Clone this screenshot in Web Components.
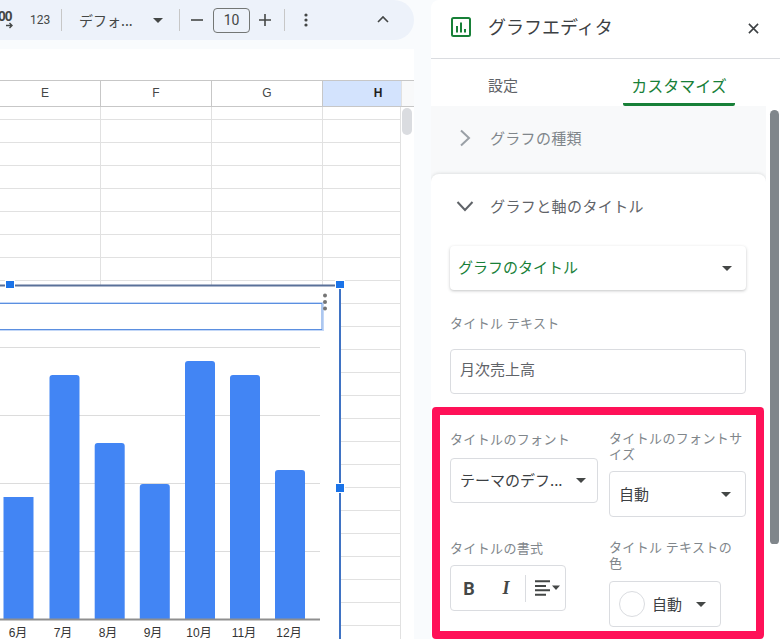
<!DOCTYPE html>
<html lang="ja">
<head>
<meta charset="utf-8">
<title>グラフエディタ</title>
<style>
  html, body { margin: 0; height: 639px; overflow: hidden; background: #f9fbfd; }
  body { font-family: "Noto Sans CJK JP", "Noto Sans", sans-serif; display: flex; gap: 17px; }
</style>
</head>
<body>
<sheet-area></sheet-area>
<chart-editor></chart-editor>

<script>
// small helper so each element only declares its css + markup
function define(name, css, html) {
  customElements.define(name, class extends HTMLElement {
    constructor() {
      super();
      this.attachShadow({mode: 'open'}).innerHTML = `<style>${css}</style>${html}`;
    }
  });
}

const caret = `<svg width="10" height="5" viewBox="0 0 10 5"><path d="M0 0h10L5 5z" fill="#444746"/></svg>`;

define('sheet-toolbar', `
  :host { display: flex; align-items: center; height: 40px; background: #edf2fa; border-radius: 0 22px 22px 0; color: #444746; font-family: Roboto, sans-serif; overflow: hidden; }
  .dec { width: 13px; height: 26px; margin-right: 17px; position: relative; overflow: hidden; }
  .dec b { display: block; font: bold 14px/13px "Liberation Sans", sans-serif; letter-spacing: -1px; margin: 3px 0 0 -2px; }
  .dec svg { position: absolute; left: 6px; top: 15px; }
  .num { font-size: 12px; width: 20px; margin-right: 11px; }
  .sep { width: 1px; height: 22px; background: #c7c7c7; }
  .font { font: 14px "Noto Sans CJK JP", sans-serif; margin: 0 16px 0 17px; width: 58px; white-space: nowrap; }
  .box { width: 35px; height: 23px; border: 1px solid #747775; border-radius: 4px; text-align: center; font-size: 14px; line-height: 23px; margin: 0 9px 0 10px; color: #444746; }
  svg { flex: none; }
`, `
  <div class="dec"><b>00</b><svg width="7" height="7" viewBox="0 0 7 7"><path d="M0 3.5h5M3.500 1 6 3.500 3.500 6" fill="none" stroke="#444746" stroke-width="1.4"/></svg></div>
  <span class="num">123</span>
  <span class="sep"></span>
  <span class="font">デフォ...</span>
  ${caret}
  <span class="sep" style="margin:0 11px 0 16px"></span>
  <svg width="12" height="12" viewBox="0 0 12 12"><path d="M0 6h12" stroke="#444746" stroke-width="1.6"/></svg>
  <span class="box">10</span>
  <svg width="12" height="12" viewBox="0 0 12 12"><path d="M0 6h12M6 0v12" stroke="#444746" stroke-width="1.6"/></svg>
  <span class="sep" style="margin:0 19px 0 13px"></span>
  <svg width="4" height="14" viewBox="0 0 4 14"><circle cx="2" cy="2" r="1.6" fill="#444746"/><circle cx="2" cy="7" r="1.6" fill="#444746"/><circle cx="2" cy="12" r="1.6" fill="#444746"/></svg>
  <svg style="margin:-2px 0 0 69px" width="12" height="8" viewBox="0 0 12 8"><path d="M1 7l5-5 5 5" fill="none" stroke="#444746" stroke-width="1.6"/></svg>
`);

define('sheet-grid', `
  :host { display: block; position: relative; flex: 1; background: #fff; overflow: hidden; }
  .formula { height: 31px; border-bottom: 1px solid #c7c7c7; }
  .head { display: flex; height: 25px; border-bottom: 1px solid #c7c7c7; }
  .cols { display: flex; width: 401px; overflow: hidden; }
  .cols span { flex: none; width: 110px; border-right: 1px solid #c7c7c7; text-align: center; font: 12px/25px "Liberation Sans", sans-serif; color: #444746; }
  .cols span:first-child { margin-left: -10px; }
  .cols .sel { background: #d3e3fd; color: #1f1f1f; font-weight: bold; border-right: none; }
  .corner { flex: 1; background: #f8f9fa; border-left: 1px solid #e1e1e1; }
  .body { position: relative; height: 532px; }
  .cells { position: absolute; left: 0; top: 0; bottom: 0; width: 400px; border-right: 1px solid #e1e1e1;
    background-image: linear-gradient(to top, #e1e1e1 1px, transparent 1px), linear-gradient(to left, #e1e1e1 1px, transparent 1px);
    background-size: 100% 23px, 111px 100%; background-position: 0 -10px, -10px 0; }
  .thumb { position: absolute; left: 402px; top: 1px; width: 10px; height: 27px; border-radius: 5px; background: #dadce0; }
`, `
  <div class="formula"></div>
  <div class="head"><div class="cols"><span>E</span><span>F</span><span>G</span><span class="sel">H</span></div><div class="corner"></div></div>
  <div class="body"><div class="cells"></div><div class="thumb"></div><slot></slot></div>
`);

// chart sits on top of the cells, its place in the sheet is free
define('chart-embed', `
  :host { display: block; position: absolute; left: 0; top: 170px; width: 345px; height: 362px; }
  svg { display: block; }
  text { font: 12px "Liberation Sans", "Noto Sans CJK JP", sans-serif; fill: #333; text-anchor: middle; }
`, `
  <svg width="345" height="362" viewBox="0 277 345 362">
    <rect x="-5" y="285" width="345" height="360" fill="#fff"/>
    <path d="M0 285.500H340" stroke="#5a7199" stroke-width="2"/>
    <path d="M340 285V639" stroke="#3f73c4" stroke-width="2"/>
    <rect x="-5" y="303.500" width="327" height="26" fill="none" stroke="#5b8fe0" stroke-width="1"/>
    <rect x="-5" y="302.500" width="328.500" height="28" fill="none" stroke="#c3d7f7" stroke-width="1"/>
    <g fill="#757575"><circle cx="325" cy="295.500" r="2"/><circle cx="325" cy="302" r="2"/><circle cx="325" cy="308.500" r="2"/></g>
    <g stroke="#dcdcdc" stroke-width="1"><path d="M0 347.500H320M0 415.500H320M0 483.500H320M0 551.500H320"/></g>
    <g fill="#4285f4">
      <rect x="3.500" y="497" width="30" height="122"/>
      <path d="M49.500 378a3 3 0 0 1 3-3h24a3 3 0 0 1 3 3V619h-30z"/>
      <path d="M94.700 446a3 3 0 0 1 3-3h24a3 3 0 0 1 3 3V619h-30z"/>
      <path d="M139.800 487a3 3 0 0 1 3-3h24a3 3 0 0 1 3 3V619h-30z"/>
      <path d="M185 364a3 3 0 0 1 3-3h24a3 3 0 0 1 3 3V619h-30z"/>
      <path d="M230 378a3 3 0 0 1 3-3h24a3 3 0 0 1 3 3V619h-30z"/>
      <path d="M275 473a3 3 0 0 1 3-3h24a3 3 0 0 1 3 3V619h-30z"/>
    </g>
    <path d="M0 619.500H320" stroke="#8f8f8f" stroke-width="2"/>
    <text x="18" y="637">6月</text><text x="63" y="637">7月</text><text x="108" y="637">8月</text><text x="153" y="637">9月</text>
    <text x="199" y="637">10月</text><text x="244" y="637">11月</text><text x="289" y="637">12月</text>
    <g fill="#1a73e8" stroke="#fff" stroke-width="1"><rect x="5.500" y="280.500" width="9" height="8"/><rect x="335.500" y="280.500" width="9" height="8"/><rect x="335.500" y="483.500" width="9" height="9"/></g>
  </svg>
`);

define('sheet-area', `
  :host { display: flex; flex-direction: column; width: 414px; flex: none; gap: 9px; height: 639px; }
`, `
  <sheet-toolbar></sheet-toolbar>
  <sheet-grid><chart-embed></chart-embed></sheet-grid>
`);

define('select-box', `
  :host { display: flex; align-items: center; justify-content: space-between; box-sizing: border-box; border: 1px solid #dadce0; border-radius: 4px; padding: 0 14px 0 9px; font-size: 15px; color: #3c4043; background: #fff; }
  ::slotted(*) { flex: none; margin-top: -2px; }
`, `<slot></slot>${caret}`);

define('form-field', `
  :host { display: block; }
  .lab { display: block; font-size: 13px; letter-spacing: .35px; line-height: 16px; color: #80868b; margin-bottom: var(--lab-gap, 9px); }
`, `<span class="lab"><slot name="label"></slot></span><slot></slot>`);

define('format-bar', `
  :host { display: flex; align-items: center; box-sizing: border-box; width: 116px; height: 46px; border: 1px solid #dadce0; border-radius: 4px; color: #444746; }
  b { width: 36px; text-align: center; font: bold 18px "Roboto", sans-serif; }
  i { width: 38px; text-align: center; font: italic bold 18px "Liberation Serif", serif; }
  .sep { width: 1px; height: 27px; background: #dadce0; margin-right: 9px; }
  svg { flex: none; }
`, `
  <b>B</b><i>I</i><span class="sep"></span>
  <svg width="26" height="16" viewBox="0 0 26 16"><path d="M0 1.200h15M0 6h11M0 10.300h15M0 14.800h11" stroke="#444746" stroke-width="2" fill="none"/><path d="M17 5.500h8L21 10z" fill="#444746"/></svg>
`);

define('chart-editor', `
  :host { display: flex; flex-direction: column; width: 349px; height: 639px; background: #fff; border-radius: 8px 0 0 0; flex: none; position: relative; }
  header { display: flex; align-items: center; height: 59px; box-sizing: border-box; border-bottom: 1px solid #dadce0; padding: 0 21px 0 20px; color: #3c4043; flex: none; }
  header svg:first-child { margin-top: -4px; }
  header h1 { font-size: 18px; font-weight: 400; margin: -7px 0 0 17px; flex: 1; }
  header svg:last-child { margin-top: -2px; }
  nav { display: flex; height: 47px; flex: none; font-size: 15px; color: #5f6368; }
  nav span { display: block; height: 44px; line-height: 52px; }
  nav .first { margin-left: 57px; width: 135px; }
  nav .on { width: 112px; font-size: 16px; text-align: center; color: #188038; border-bottom: 3px solid #188038; border-radius: 0 0 2px 2px; }
  .main { display: flex; flex: 1; min-height: 0; }
  .pane { width: 335px; flex: none; background: #f8f9fa; overflow: hidden; }
  .closed { display: flex; align-items: center; height: 68px; box-sizing: border-box; padding: 0 0 5px 28px; gap: 19px; color: #80868b; font-size: 15px; letter-spacing: .3px; }
  .card { background: #fff; border-radius: 8px 8px 0 0; box-shadow: 0 -1px 3px rgba(60,64,67,.12); height: 600px; padding: 0 19px; box-sizing: border-box; }
  .open { display: flex; align-items: center; height: 65px; box-sizing: border-box; padding-bottom: 2px; color: #5f6368; font-size: 15px; letter-spacing: .4px; margin-left: 6px; gap: 16px; }
  .dd { display: flex; align-items: center; justify-content: space-between; width: 296px; height: 44px; box-sizing: border-box; padding: 0 14px 0 8px; border-radius: 4px; margin-top: 7px; color: #188038; font-size: 15px; box-shadow: 0 1px 3px rgba(60,64,67,.3); }
  .dd span { margin-top: -3px; }
  .text { margin-top: 25px; width: 296px; --lab-gap: 18px; }
  .input { height: 45px; box-sizing: border-box; border: 1px solid #dadce0; border-radius: 4px; padding: 0 9px 6px; display: flex; align-items: center; font-size: 15px; color: #5f6368; }
  .mark { position: relative; margin-top: 37px; display: grid; grid-template-columns: 148px 137px; column-gap: 11px; row-gap: 23px; width: 296px; }
  .mark::after { content: ""; position: absolute; left: -18px; right: -18px; top: -24px; height: 232px; border: 8px solid #ff1158; border-radius: 4px; box-sizing: border-box; pointer-events: none; }
  .mark .r { margin-top: -1px; }
  .rail { flex: 1; position: relative; }
  .thumb { position: absolute; left: 4px; top: 4px; width: 9px; height: 434px; background: #80868b; border-radius: 5px 5px 4px 4px; }
  .sw { display: inline-flex; align-items: center; gap: 7px; }
  .sw i { width: 24px; height: 24px; margin-top: 2px; border: 1px solid #dadce0; border-radius: 50%; }
`, `
  <header>
    <svg width="20" height="20" viewBox="0 0 20 20"><rect x="1" y="1" width="18" height="18" rx="1.500" fill="none" stroke="#188038" stroke-width="2"/><path d="M6 9v6.500M10 5.500v10M14 12v3.500" stroke="#188038" stroke-width="2"/></svg>
    <h1>グラフエディタ</h1>
    <svg width="11" height="11" viewBox="0 0 12 12"><path d="M1 1l10 10M11 1 1 11" stroke="#3c4043" stroke-width="1.700"/></svg>
  </header>
  <nav><span class="first">設定</span><span class="on">カスタマイズ</span></nav>
  <div class="main">
    <div class="pane">
      <div class="closed"><svg width="12" height="18" viewBox="0 0 12 18"><path d="M2 1.500 10 9l-8 7.500" fill="none" stroke="#9aa0a6" stroke-width="2"/></svg><span>グラフの種類</span></div>
      <div class="card">
        <div class="open"><svg width="18" height="12" viewBox="0 0 18 12"><path d="M1.500 2 9 10l7.500-8" fill="none" stroke="#5f6368" stroke-width="2"/></svg><span>グラフと軸のタイトル</span></div>
        <div class="dd"><span>グラフのタイトル</span>${caret}</div>
        <form-field class="text"><span slot="label">タイトル テキスト</span><div class="input">月次売上高</div></form-field>
        <div class="mark">
          <form-field style="--lab-gap:11px"><span slot="label">タイトルのフォント</span><select-box style="height:45px;padding:0 11px 0 9px"><span>テーマのデフ...</span></select-box></form-field>
          <form-field class="r" style="--lab-gap:9px"><span slot="label">タイトルのフォントサ<br>イズ</span><select-box style="height:46px"><span>自動</span></select-box></form-field>
          <form-field style="--lab-gap:9px"><span slot="label">タイトルの書式</span><format-bar></format-bar></form-field>
          <form-field class="r" style="--lab-gap:10px"><span slot="label">タイトル テキストの<br>色</span><select-box style="height:46px;width:112px"><span class="sw"><i></i>自動</span></select-box></form-field>
        </div>
      </div>
    </div>
    <div class="rail"><div class="thumb"></div></div>
  </div>
`);
</script>
</body>
</html>
